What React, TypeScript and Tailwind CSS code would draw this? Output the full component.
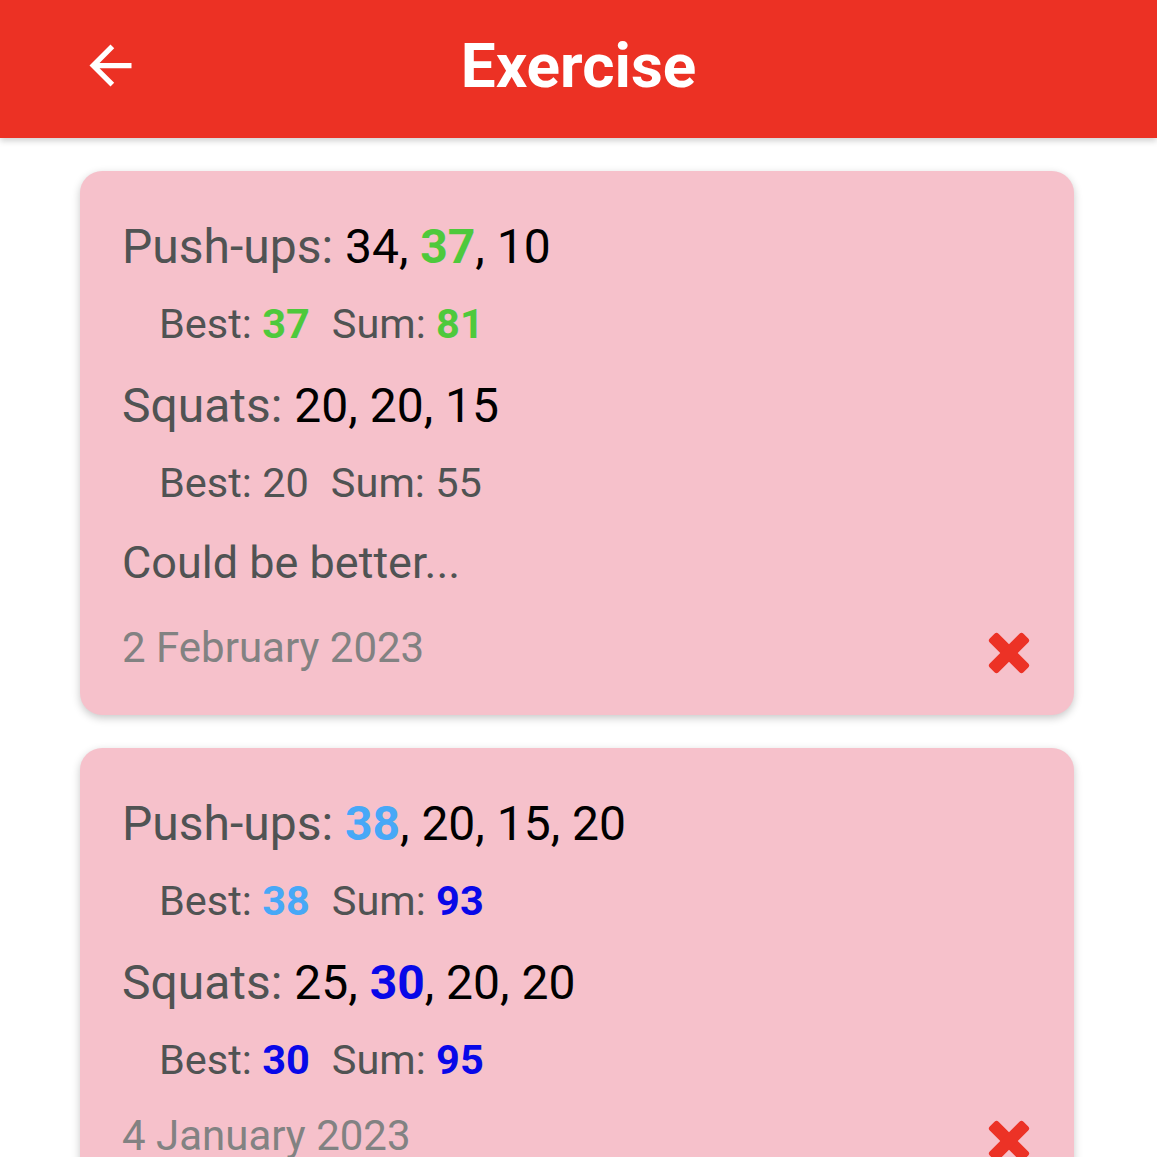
import React from 'react'

type Part = { text: string; cls?: string }

const GREEN = 'text-[#4ec93c] font-bold'
const LIGHT = 'text-[#47a8f7] font-bold'
const BLUE = 'text-[#0808e8] font-bold'

interface Exercise {
  name: string
  reps: Part[]
  best: Part
  sum: Part
}

interface Entry {
  exercises: Exercise[]
  comment?: string
  date: string
}

const entries: Entry[] = [
  {
    exercises: [
      {
        name: 'Push-ups',
        reps: [{ text: '34' }, { text: '37', cls: GREEN }, { text: '10' }],
        best: { text: '37', cls: GREEN },
        sum: { text: '81', cls: GREEN },
      },
      {
        name: 'Squats',
        reps: [{ text: '20' }, { text: '20' }, { text: '15' }],
        best: { text: '20' },
        sum: { text: '55' },
      },
    ],
    comment: 'Could be better...',
    date: '2 February 2023',
  },
  {
    exercises: [
      {
        name: 'Push-ups',
        reps: [{ text: '38', cls: LIGHT }, { text: '20' }, { text: '15' }, { text: '20' }],
        best: { text: '38', cls: LIGHT },
        sum: { text: '93', cls: BLUE },
      },
      {
        name: 'Squats',
        reps: [{ text: '25' }, { text: '30', cls: BLUE }, { text: '20' }, { text: '20' }],
        best: { text: '30', cls: BLUE },
        sum: { text: '95', cls: BLUE },
      },
    ],
    date: '4 January 2023',
  },
]

const BackArrow = () => (
  <svg width="63" height="63" viewBox="0 0 24 24" fill="white">
    <path d="M20 11H7.83l5.59-5.59L12 4l-8 8 8 8 1.41-1.41L7.83 13H20v-2z" />
  </svg>
)

const DeleteIcon = () => (
  <svg width="42" height="42" viewBox="0 0 44 44">
    <g transform="rotate(45 22 22)" fill="#ec3226">
      <rect x="-3" y="15.5" width="50" height="13" rx="3" />
      <rect x="15.5" y="-3" width="13" height="50" rx="3" />
    </g>
  </svg>
)

function ExerciseRows({ ex, first }: { ex: Exercise; first: boolean }) {
  return (
    <div className={first ? '' : 'mt-[30px]'}>
      <div className="h-[56px] leading-[56px] text-[48px] text-[#505353] whitespace-nowrap">
        {ex.name}:{' '}
        {ex.reps.map((r, i) => (
          <React.Fragment key={i}>
            <span className={r.cls ?? 'text-black'}>{r.text}</span>
            {i < ex.reps.length - 1 && <span className="text-black">, </span>}
          </React.Fragment>
        ))}
      </div>
      <div className="mt-[25px] pl-[37px] h-[48px] leading-[48px] text-[41.5px] text-[#505353] whitespace-nowrap">
        Best: <span className={ex.best.cls ?? 'text-[#505353]'}>{ex.best.text}</span>
        <span className="inline-block w-[22px]" />
        Sum: <span className={ex.sum.cls ?? 'text-[#505353]'}>{ex.sum.text}</span>
      </div>
    </div>
  )
}

function EntryCard({ entry }: { entry: Entry }) {
  return (
    <div className="rounded-[22px] bg-[#f6c1cb] shadow-[0_3px_8px_rgba(0,0,0,0.22)] pt-[48px] pb-[43px] pl-[42px] pr-[44px]">
      {entry.exercises.map((ex, i) => (
        <ExerciseRows key={i} ex={ex} first={i === 0} />
      ))}
      {entry.comment && (
        <div className="mt-[28px] h-[56px] leading-[56px] text-[45px] text-[#505353]">{entry.comment}</div>
      )}
      <div className={`${entry.comment ? 'mt-[33px]' : 'mt-[28px]'} flex items-center justify-between h-[48px]`}>
        <span className="text-[42px] leading-[48px] text-[#828282]">{entry.date}</span>
        <span className="mt-[10px]">
          <DeleteIcon />
        </span>
      </div>
    </div>
  )
}

export default function App() {
  return (
    <div className="min-h-screen bg-white overflow-hidden" style={{ fontFamily: 'Roboto, "Noto Sans", sans-serif' }}>
      <header className="relative h-[138px] bg-[#ec3124] flex items-center justify-center shadow-[0_3px_6px_rgba(0,0,0,0.18)] z-10">
        <button className="absolute left-[79px] top-[34px]">
          <BackArrow />
        </button>
        <h1 className="text-white font-bold text-[62px] leading-none -mt-[6px]">Exercise</h1>
      </header>
      <main className="pl-[80px] pr-[83px] pt-[33px] flex flex-col gap-[33px]">
        {entries.map((e, i) => (
          <EntryCard key={i} entry={e} />
        ))}
      </main>
    </div>
  )
}
